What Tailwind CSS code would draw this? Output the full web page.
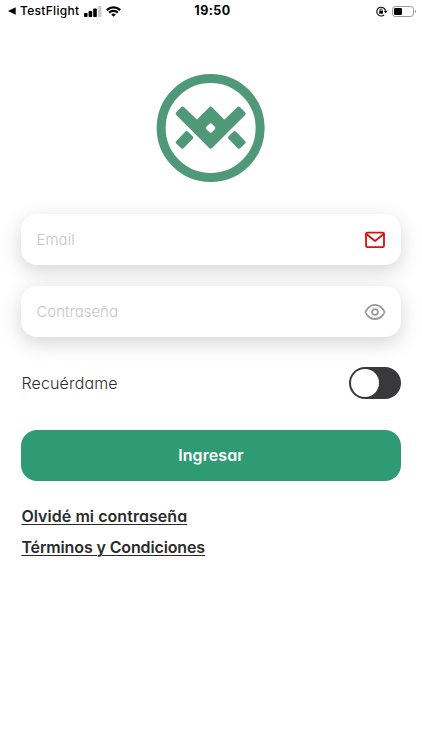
<!DOCTYPE html>
<html lang="es">
<head>
<meta charset="utf-8">
<meta name="viewport" content="width=device-width, initial-scale=1">
<title>Ingresar</title>
<script src="https://cdn.jsdelivr.net/npm/@tailwindcss/browser@4"></script>
</head>
<body class="h-[750px] overflow-hidden bg-white font-['Inter','Liberation_Sans',sans-serif] text-[#2b2b2d] [font-feature-settings:'cv11']">
<header class="flex h-[22px] items-center pr-[5px] pl-2 text-black [font-feature-settings:normal]">
  <div class="flex flex-1 items-center">
    <svg class="h-2 w-2" viewBox="0 0 8 8"><path d="M0 4 7.7.3v7.4z"/></svg>
    <span class="ml-1 w-[60px] text-[12px] leading-4 font-medium tracking-[0.3px] whitespace-nowrap">TestFlight</span>
    <svg class="ml-1 h-[11px] w-[18px]" viewBox="0 0 18 11"><rect y="7" width="3.6" height="4" rx=".8"/><rect x="4.6" y="5" width="3.6" height="6" rx=".8"/><rect x="9.2" y="2.6" width="3.6" height="8.4" rx=".8"/><rect x="13.9" width="3.6" height="11" rx=".8" fill="#ccc"/></svg>
    <svg class="ml-1 h-[11px] w-[15px]" viewBox="0 0 15 11" fill="none" stroke="#000" stroke-width="2.3"><path d="M.8 4.1a9.6 9.6 0 0 1 13.4 0M3.2 6.7a6.1 6.1 0 0 1 8.6 0"/><path d="M7.5 10.8 5.2 8.5a3.3 3.3 0 0 1 4.6 0z" fill="#000" stroke="none"/></svg>
  </div>
  <span class="text-[12.5px] leading-4 font-bold tracking-[0.45px]">19:50</span>
  <div class="flex flex-1 items-center justify-end">
    <svg class="h-[11px] w-3" viewBox="0 0 12 11" fill="none" stroke="#000" stroke-width="1.1"><path d="M8.2 8.9A4.4 4.4 0 1 1 9.5 4.6"/><path d="M7.7 4.8h3.8L9.8 7.2z" fill="#000" stroke="none"/><rect x="3.2" y="4.9" width="3.8" height="2.8" fill="#000" stroke="none"/><path d="M4 5V4a1.1 1.1 0 0 1 2.2 0v1" stroke-width=".8"/></svg>
    <svg class="ml-1 h-[11px] w-[25px]" viewBox="0 0 25 11"><rect x=".5" y=".5" width="21" height="10" rx="2.8" fill="none" stroke="#999"/><rect x="2" y="2" width="8" height="7" rx="1.3"/><path d="M23 3.7c1.4.6 1.4 3 0 3.6z" fill="#999"/></svg>
  </div>
</header>

<main class="flex flex-col px-[21.4px]">
  <svg class="mt-[46px] ml-[128.6px] size-[120px]" viewBox="0 0 360 360" fill="#4f9878" stroke="#4f9878" stroke-linejoin="round">
    <circle cx="182" cy="180" r="148.5" fill="none" stroke-width="27"/>
    <path stroke-width="12" d="M98 122 83 137 182 236 281 137 266 122 223 163 182 122 141 163Z"/>
    <path stroke-width="10" d="m110 194 15 15-28 28-15-14zM254 194l-15 15 28 28 15-14z"/>
    <path fill="#fff" stroke="#fff" stroke-width="10" d="m182 171 9 9-9 9-9-9z"/>
  </svg>

  <label class="mt-[26px] flex h-[51px] items-center justify-between rounded-2xl bg-white px-[15px] shadow-[0_6px_20px_rgba(0,0,0,0.17)]">
    <span class="pt-[2px] text-[15px] font-light tracking-[0.1px] text-[#c6c6c8]">Email</span>
    <svg class="size-[22px]" viewBox="0 0 24 24" fill="none" stroke="#d9100f" stroke-width="2" stroke-linecap="round" stroke-linejoin="round"><rect x="2.2" y="4" width="19.6" height="15.8" rx="1.5"/><path d="m2.5 5.500 9.500 7.500 9.500-7.500"/></svg>
  </label>
  <label class="relative mt-[21px] flex h-[51px] items-center justify-between rounded-2xl bg-white px-[15px] shadow-[0_6px_20px_rgba(0,0,0,0.17)]">
    <span class="pt-[2px] text-[15px] font-light text-[#c6c6c8]">Contraseña</span>
    <svg class="size-[22px]" viewBox="0 0 24 24" fill="none" stroke="#999" stroke-width="1.9" stroke-linecap="round" stroke-linejoin="round"><path d="M1.500 12S5 4.200 12 4.200 22.500 12 22.500 12 19 19.800 12 19.800 1.500 12 1.500 12z"/><circle cx="12" cy="12" r="3.2"/></svg>
  </label>

  <div class="mt-[30px] flex h-8 items-center justify-between">
    <span class="text-[16px] font-light tracking-[0.15px]">Recuérdame</span>
    <div class="flex h-8 w-[52px] items-center rounded-full bg-[#39393b] pl-[2px]"><span class="size-7 rounded-full bg-white"></span></div>
  </div>

  <button class="mt-[31px] h-[50.5px] rounded-2xl bg-[#2f9b74] text-[16px] font-semibold tracking-[0.1px] text-white">Ingresar</button>

  <a class="mt-[23.5px] self-start text-[16px] leading-6 font-semibold tracking-[0.05px] underline decoration-1 underline-offset-2">Olvidé mi contraseña</a>
  <a class="mt-[6.5px] self-start text-[16px] leading-6 font-semibold tracking-[-0.13px] underline decoration-1 underline-offset-2">Términos y Condiciones</a>
</main>
</body>
</html>
